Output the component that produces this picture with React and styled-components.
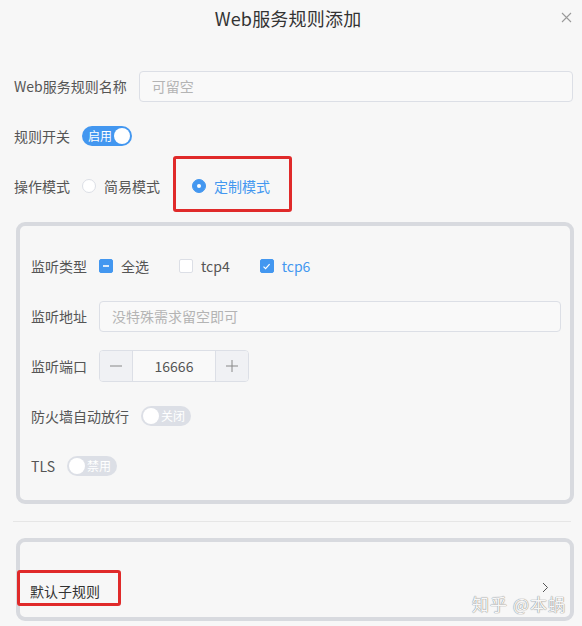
import React from 'react';
import styled, { createGlobalStyle } from 'styled-components';

const GlobalStyle = createGlobalStyle`
  html, body {
    margin: 0;
    padding: 0;
    background: #f7f7f7;
  }
  body {
    font-family: "Noto Sans CJK SC", "Noto Sans", sans-serif;
    color: #555;
    font-size: 14px;
  }
  * { box-sizing: border-box; }
`

const Page = styled.div`
  width: 582px;
  height: 626px;
  overflow: hidden;
  background: #f7f7f7;
`

const Header = styled.div`
  position: relative;
  height: 36px;
  display: flex;
  align-items: center;
  justify-content: center;
`

const Title = styled.div`
  font-size: 18px;
  color: #333;
  letter-spacing: 0.2px;
  margin-left: -6px;
`

const Close = styled.div`
  position: absolute;
  right: 10px;
  top: 12px;
  width: 11px;
  height: 11px;
  display: flex;
`

const Form = styled.div`
  padding: 35px 9px 0 14px;
`

const Row = styled.div`
  display: flex;
  align-items: center;
  height: 30px;
  margin-bottom: ${p => p.$last ? 0 : 20}px;
`

const Label = styled.div`
  color: #555;
  font-size: 14px;
  margin-right: 12px;
  white-space: nowrap;
`

const Input = styled.div`
  flex: 1;
  height: 31px;
  display: flex;
  align-items: center;
  padding: 0 12px;
  border: 1px solid #dcdfe6;
  border-radius: 4px;
  background: #f9f9f9;
  color: #b4b4b4;
  font-size: 14px;
`

const Switch = styled.div`
  width: 50px;
  height: 20px;
  border-radius: 10px;
  background: ${p => p.$on ? '#4397f0' : '#dcdfe6'};
  display: flex;
  align-items: center;
  flex-direction: ${p => p.$on ? 'row' : 'row-reverse'};
  padding-left: ${p => p.$on ? 6 : 2}px;
  padding-right: ${p => p.$on ? 2 : 6}px;
  justify-content: space-between;
`

const SwitchText = styled.span`
  color: #fff;
  font-size: 12px;
  line-height: 1;
`

const Knob = styled.span`
  width: 16px;
  height: 16px;
  border-radius: 50%;
  background: #fff;
`

const RadioOption = styled.div`
  position: relative;
  display: flex;
  align-items: center;
  margin-right: 32px;
  color: ${p => p.$checked ? '#4397f0' : '#555'};

  ${p => p.$marked && `
    &::after {
      content: '';
      position: absolute;
      left: -19px;
      right: -22px;
      top: -20px;
      bottom: -16px;
      border: 3px solid #e02a2a;
      border-radius: 3px;
    }
  `}
`

const RadioDot = styled.span`
  width: 14px;
  height: 14px;
  border-radius: 50%;
  margin-right: 8px;
  border: 1px solid ${p => p.$checked ? '#4397f0' : '#dcdfe6'};
  background: ${p => p.$checked ? '#4397f0' : '#fff'};
  display: flex;
  align-items: center;
  justify-content: center;

  &::after {
    content: '';
    width: 4px;
    height: 4px;
    border-radius: 50%;
    background: ${p => p.$checked ? '#fff' : 'transparent'};
  }
`

const Card = styled.div`
  position: relative;
  margin: 21px -1px 0 2px;
  border: 4px solid #d8dadf;
  border-radius: 9px;
  padding: ${p => p.$pad};
`

const CheckOption = styled.div`
  display: flex;
  align-items: center;
  margin-right: 30px;
  color: ${p => p.$checked ? '#4397f0' : '#555'};
`

const Box = styled.span`
  width: 14px;
  height: 14px;
  border-radius: 2px;
  margin-right: 8px;
  border: 1px solid ${p => p.$filled ? '#4397f0' : '#dcdfe6'};
  background: ${p => p.$filled ? '#4397f0' : '#fff'};
  display: flex;
  align-items: center;
  justify-content: center;
`

const Stepper = styled.div`
  display: flex;
  width: 150px;
  height: 32px;
  border: 1px solid #dcdfe6;
  border-radius: 4px;
  overflow: hidden;
  background: #f9f9f9;
`

const StepBtn = styled.div`
  width: 33px;
  display: flex;
  align-items: center;
  justify-content: center;
  background: #f0f1f4;
  border-${p => p.$side}: 1px solid #dcdfe6;
`

const StepValue = styled.div`
  flex: 1;
  display: flex;
  align-items: center;
  justify-content: center;
  color: #555;
  font-size: 14px;
`

const Divider = styled.div`
  height: 1px;
  background: #e6e6e6;
  margin: 17px 2px 0 -1px;
`

const SubRow = styled.div`
  display: flex;
  align-items: center;
  justify-content: space-between;
  height: 30px;
`

const MarkedLabel = styled.div`
  position: relative;
  color: #333;
  font-size: 14px;
  line-height: 20px;

  &::after {
    content: '';
    position: absolute;
    left: -13px;
    right: -21px;
    top: -11px;
    bottom: -5px;
    border: 3px solid #e02a2a;
    border-radius: 3px;
  }
`

const Chevron = styled.div`
  display: flex;
  margin-top: -8px;
`

const Watermark = styled.div`
  position: absolute;
  right: 4px;
  bottom: 1px;
  font-size: 17px;
  color: rgba(255, 255, 255, 0.95);
  text-shadow: 0 0 1px #8a8a8a, 0 0 1px #8a8a8a;
  letter-spacing: 1px;
`

const SecondCard = styled(Card)`
  margin-top: 16px;
`

export default function App() {
  return (
    <Page>
      <GlobalStyle />
      <Header>
        <Title>Web服务规则添加</Title>
        <Close>
          <svg width="11" height="11" viewBox="0 0 11 11">
            <path d="M1 1L10 10M10 1L1 10" stroke="#9a9a9a" strokeWidth="1.1" />
          </svg>
        </Close>
      </Header>

      <Form>
        <Row>
          <Label>Web服务规则名称</Label>
          <Input>可留空</Input>
        </Row>
        <Row>
          <Label>规则开关</Label>
          <Switch $on>
            <SwitchText>启用</SwitchText>
            <Knob />
          </Switch>
        </Row>
        <Row $last>
          <Label>操作模式</Label>
          <RadioOption>
            <RadioDot />
            简易模式
          </RadioOption>
          <RadioOption $checked $marked>
            <RadioDot $checked />
            定制模式
          </RadioOption>
        </Row>

        <Card $pad="25px 9px 19px 11px">
          <Row>
            <Label>监听类型</Label>
            <CheckOption>
              <Box $filled>
                <svg width="8" height="8" viewBox="0 0 8 8">
                  <path d="M1 4H7" stroke="#fff" strokeWidth="1.6" />
                </svg>
              </Box>
              全选
            </CheckOption>
            <CheckOption>
              <Box />
              tcp4
            </CheckOption>
            <CheckOption $checked>
              <Box $filled>
                <svg width="9" height="9" viewBox="0 0 9 9">
                  <path d="M1.5 4.6L3.6 6.6L7.6 2.2" stroke="#fff" strokeWidth="1.2" fill="none" />
                </svg>
              </Box>
              tcp6
            </CheckOption>
          </Row>
          <Row>
            <Label>监听地址</Label>
            <Input>没特殊需求留空即可</Input>
          </Row>
          <Row>
            <Label>监听端口</Label>
            <Stepper>
              <StepBtn $side="right">
                <svg width="12" height="12" viewBox="0 0 12 12">
                  <path d="M0 6H12" stroke="#888" strokeWidth="1" />
                </svg>
              </StepBtn>
              <StepValue>16666</StepValue>
              <StepBtn $side="left">
                <svg width="12" height="12" viewBox="0 0 12 12">
                  <path d="M0 6H12M6 0V12" stroke="#888" strokeWidth="1" />
                </svg>
              </StepBtn>
            </Stepper>
          </Row>
          <Row>
            <Label>防火墙自动放行</Label>
            <Switch>
              <SwitchText>关闭</SwitchText>
              <Knob />
            </Switch>
          </Row>
          <Row $last>
            <Label>TLS</Label>
            <Switch>
              <SwitchText>禁用</SwitchText>
              <Knob />
            </Switch>
          </Row>
        </Card>

        <Divider />

        <SecondCard $pad="34px 21px 11px 10px">
          <SubRow>
            <MarkedLabel>默认子规则</MarkedLabel>
            <Chevron>
              <svg width="7" height="11" viewBox="0 0 7 11">
                <path d="M1 1L5.5 5.5L1 10" stroke="#555" strokeWidth="1" fill="none" />
              </svg>
            </Chevron>
          </SubRow>
          <Watermark>知乎 @本蜗</Watermark>
        </SecondCard>
      </Form>
    </Page>
  );
}
